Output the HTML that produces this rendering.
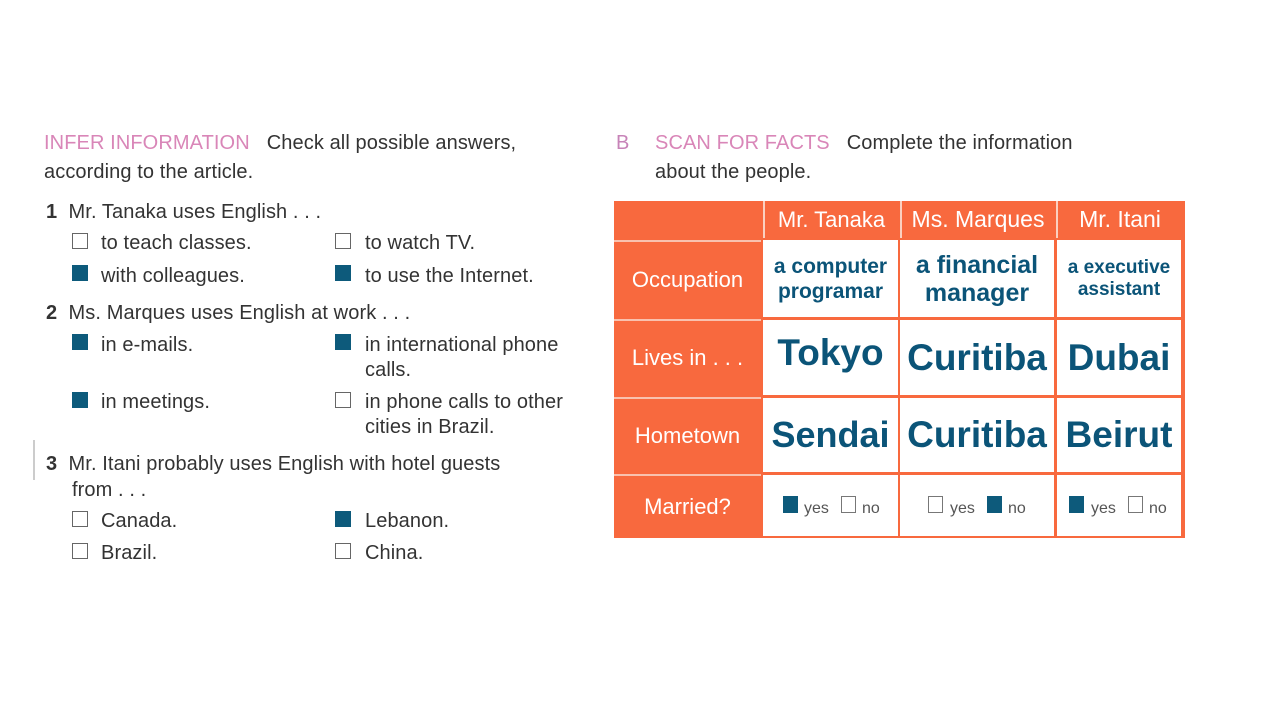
<!DOCTYPE html>
<html><head><meta charset="utf-8"><style>
*{margin:0;padding:0;box-sizing:border-box}
body{width:1275px;height:705px;background:#fff;position:relative;overflow:hidden;font-family:"Liberation Sans",sans-serif;color:#333}
.t{position:absolute;font-size:20px;line-height:22px;white-space:nowrap;letter-spacing:0.1px}
.pk{color:#d986b8}
.cb{position:absolute;width:16px;height:16px;border:1.5px solid #666;background:#fff}
.cb.f{background:#0d5a7b;border-color:#0d5a7b}
.c{position:absolute;display:flex;align-items:center;justify-content:center;text-align:center;white-space:nowrap}
.o{background:#f8693e;color:#fff;font-size:22px}
.w{background:#fff;color:#0b5478;font-weight:bold}
.sm{position:absolute;width:15px;height:17px;border:1.5px solid #777;background:#fff}
.sm.f{background:#0d5a7b;border-color:#0d5a7b}
.y{position:absolute;font-size:16px;color:#555;top:500px}
</style></head><body>
<div style="position:absolute;left:33px;top:440px;width:2px;height:40px;background:#ccc"></div>
<div class="t" style="left:44px;top:132px"><span class="pk">INFER INFORMATION</span>&nbsp;&nbsp; Check all possible answers,</div>
<div class="t" style="left:44px;top:161px">according to the article.</div>
<div class="t" style="left:46px;top:201px"><b>1</b>&nbsp; Mr. Tanaka uses English . . .</div>
<div class="cb" style="left:72px;top:233px"></div><div class="t" style="left:101px;top:232px">to teach classes.</div>
<div class="cb" style="left:335px;top:233px"></div><div class="t" style="left:365px;top:232px">to watch TV.</div>
<div class="cb f" style="left:72px;top:265px"></div><div class="t" style="left:101px;top:265px">with colleagues.</div>
<div class="cb f" style="left:335px;top:265px"></div><div class="t" style="left:365px;top:265px">to use the Internet.</div>
<div class="t" style="left:46px;top:302px"><b>2</b>&nbsp; Ms. Marques uses English at work . . .</div>
<div class="cb f" style="left:72px;top:334px"></div><div class="t" style="left:101px;top:334px">in e-mails.</div>
<div class="cb f" style="left:335px;top:334px"></div><div class="t" style="left:365px;top:334px">in international phone</div>
<div class="t" style="left:365px;top:359px">calls.</div>
<div class="cb f" style="left:72px;top:392px"></div><div class="t" style="left:101px;top:391px">in meetings.</div>
<div class="cb" style="left:335px;top:392px"></div><div class="t" style="left:365px;top:391px">in phone calls to other</div>
<div class="t" style="left:365px;top:416px">cities in Brazil.</div>
<div class="t" style="left:46px;top:453px"><b>3</b>&nbsp; Mr. Itani probably uses English with hotel guests</div>
<div class="t" style="left:72px;top:479px">from . . .</div>
<div class="cb" style="left:72px;top:511px"></div><div class="t" style="left:101px;top:510px">Canada.</div>
<div class="cb f" style="left:335px;top:511px"></div><div class="t" style="left:365px;top:510px">Lebanon.</div>
<div class="cb" style="left:72px;top:543px"></div><div class="t" style="left:101px;top:542px">Brazil.</div>
<div class="cb" style="left:335px;top:543px"></div><div class="t" style="left:365px;top:542px">China.</div>

<div class="t" style="left:616px;top:132px;color:#c783b8">B</div>
<div class="t" style="left:655px;top:132px"><span class="pk">SCAN FOR FACTS</span>&nbsp;&nbsp; Complete the information</div>
<div class="t" style="left:655px;top:161px">about the people.</div>

<div style="position:absolute;left:614px;top:201px;width:571px;height:337px;background:#f8693e"></div>
<div class="c o" style="left:614px;top:201px;width:147px;height:36px"></div>
<div class="c o" style="left:614px;top:240px;width:147px;height:77px;border-top:2px solid #f9c1ae">Occupation</div>
<div class="c o" style="left:614px;top:319px;width:147px;height:76px;border-top:2px solid #f9c1ae">Lives in . . .</div>
<div class="c o" style="left:614px;top:397px;width:147px;height:75px;border-top:2px solid #f9c1ae">Hometown</div>
<div class="c o" style="left:614px;top:474px;width:147px;height:63px;border-top:2px solid #f9c1ae">Married?</div>
<div class="c o" style="left:763px;top:201px;width:135px;height:37px;border-left:2px solid #fbd0c0;font-size:22px">Mr. Tanaka</div>
<div class="c o" style="left:900px;top:201px;width:154px;height:37px;border-left:2px solid #fbd0c0;font-size:23px">Ms. Marques</div>
<div class="c o" style="left:1056px;top:201px;width:126px;height:37px;border-left:2px solid #fbd0c0;font-size:23px">Mr. Itani</div>
<div class="c w" style="left:763px;top:240px;width:135px;height:77px;font-size:21px;line-height:25px">a computer<br>programar</div>
<div class="c w" style="left:900px;top:240px;width:154px;height:77px;font-size:25px;line-height:28px">a financial<br>manager</div>
<div class="c w" style="left:1057px;top:240px;width:124px;height:77px;font-size:19px;line-height:22px">a executive<br>assistant</div>
<div class="c w" style="left:763px;top:320px;width:135px;height:75px;font-size:37px;padding-bottom:10px">Tokyo</div>
<div class="c w" style="left:900px;top:320px;width:154px;height:75px;font-size:37px">Curitiba</div>
<div class="c w" style="left:1057px;top:320px;width:124px;height:75px;font-size:37px">Dubai</div>
<div class="c w" style="left:763px;top:398px;width:135px;height:74px;font-size:36px">Sendai</div>
<div class="c w" style="left:900px;top:398px;width:154px;height:74px;font-size:37px">Curitiba</div>
<div class="c w" style="left:1057px;top:398px;width:124px;height:74px;font-size:37px">Beirut</div>
<div class="c w" style="left:763px;top:475px;width:135px;height:61px"></div>
<div class="c w" style="left:900px;top:475px;width:154px;height:61px"></div>
<div class="c w" style="left:1057px;top:475px;width:124px;height:61px"></div>
<div class="sm f" style="left:783px;top:496px"></div><div class="y" style="left:804px">yes</div>
<div class="sm" style="left:841px;top:496px"></div><div class="y" style="left:862px">no</div>
<div class="sm" style="left:928px;top:496px"></div><div class="y" style="left:950px">yes</div>
<div class="sm f" style="left:987px;top:496px"></div><div class="y" style="left:1008px">no</div>
<div class="sm f" style="left:1069px;top:496px"></div><div class="y" style="left:1091px">yes</div>
<div class="sm" style="left:1128px;top:496px"></div><div class="y" style="left:1149px">no</div>
</body></html>
